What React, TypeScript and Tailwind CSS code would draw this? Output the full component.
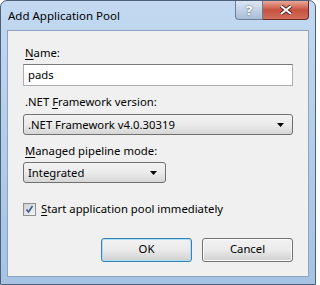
import React from "react";

const font = "font-['Noto_Sans','DejaVu_Sans',sans-serif]";

function Caret() {
  return (
    <svg width="7" height="4" viewBox="0 0 7 4" className="shrink-0">
      <path d="M0 0h7L3.5 4z" fill="#000" />
    </svg>
  );
}

function Combo({ value, className }: { value: string; className: string }) {
  return (
    <div
      className={`flex items-center justify-between rounded-[3px] border border-[#707070] bg-gradient-to-b from-[#f2f2f2] via-[#ebebeb] to-[#d6d6d6] pl-[4px] pr-[8px] ${className}`}
    >
      <span className="text-[11.3px] leading-none text-black">{value}</span>
      <Caret />
    </div>
  );
}

export default function App() {
  return (
    <div
      className={`${font} relative h-[285px] w-[316px] overflow-hidden rounded-t-[7px] border border-[#4d6078] bg-gradient-to-b from-[#c3d9f1] via-[#b3cdea] to-[#a6c3e4] text-black`}
    >
      {/* Title bar */}
      <div className="flex h-[29px] items-start">
        <span className="pl-[7px] pt-[6px] text-[11.5px] text-black">Add Application Pool</span>
        <div className="ml-auto mr-[6px] flex h-[19px]">
          <div className="flex w-[28px] items-center justify-center rounded-bl-[4px] border border-t-0 border-[#6d7f97] bg-gradient-to-b from-[#dbe6f3] via-[#c2d2e5] to-[#a8bdd6]">
            <span className="text-[13px] font-bold leading-none text-white [text-shadow:0_0_2px_#3a4a60]">?</span>
          </div>
          <div className="flex w-[46px] items-center justify-center rounded-br-[4px] border border-l-0 border-t-0 border-[#6a2a24] bg-gradient-to-b from-[#e9a99b] via-[#c7503f] to-[#d0705d]">
            <svg width="12" height="10" viewBox="0 0 12 10">
              <path d="M1 1l10 8M11 1L1 9" stroke="#3a1510" strokeWidth="3.6" />
              <path d="M1 1l10 8M11 1L1 9" stroke="#fff" strokeWidth="2.2" />
            </svg>
          </div>
        </div>
      </div>

      {/* Client area */}
      <div className="mx-[6px] h-[247px] border border-[#8ba4c2] bg-[#f0f0f0]">
        <div className="flex flex-col px-[15px] pt-[13px] text-[11.3px]">
          <div className="h-[18px] pl-[2px] leading-[18px]">
            <span className="underline underline-offset-2">N</span>ame:
          </div>
          <div className="mt-[2px] flex h-[22px] items-center border border-[#abadb3] border-t-[#7a7a7a] bg-white pl-[4px]">
            pads
          </div>
          <div className="mt-[7px] h-[18px] pl-[2px] leading-[18px]">
            .NET <span className="underline underline-offset-2">F</span>ramework version:
          </div>
          <Combo value=".NET Framework v4.0.30319" className="mt-[3px] h-[21px] w-full" />
          <div className="mt-[7px] h-[18px] pl-[2px] leading-[18px]">
            <span className="underline underline-offset-2">M</span>anaged pipeline mode:
          </div>
          <Combo value="Integrated" className="mt-[2px] h-[21px] w-[143px]" />
          <div className="mt-[18px] flex items-center">
            <div className="flex h-[13px] w-[13px] items-center justify-center border border-[#8e8f8f] bg-gradient-to-br from-[#cbcfd5] to-[#f6f6f6]">
              <svg width="9" height="9" viewBox="0 0 9 9">
                <path d="M1.5 4.5l2 2.5L7.5 1" stroke="#3c5a8a" strokeWidth="1.6" fill="none" />
              </svg>
            </div>
            <span className="ml-[5px]">
              <span className="underline underline-offset-2">S</span>tart application pool immediately
            </span>
          </div>
          <div className="mt-[20px] flex justify-end gap-[10px]">
            <button className="h-[24px] w-[91px] rounded-[3px] border border-[#3c7fb1] bg-gradient-to-b from-[#f2f2f2] via-[#ebebeb] to-[#cfcfcf] text-[11.3px] shadow-[inset_0_0_0_1px_#a8e0f8]">
              OK
            </button>
            <button className="h-[24px] w-[91px] rounded-[3px] border border-[#707070] bg-gradient-to-b from-[#f2f2f2] via-[#ebebeb] to-[#cfcfcf] text-[11.3px] shadow-[inset_0_0_0_1px_#fcfcfc]">
              Cancel
            </button>
          </div>
        </div>
      </div>
    </div>
  );
}
